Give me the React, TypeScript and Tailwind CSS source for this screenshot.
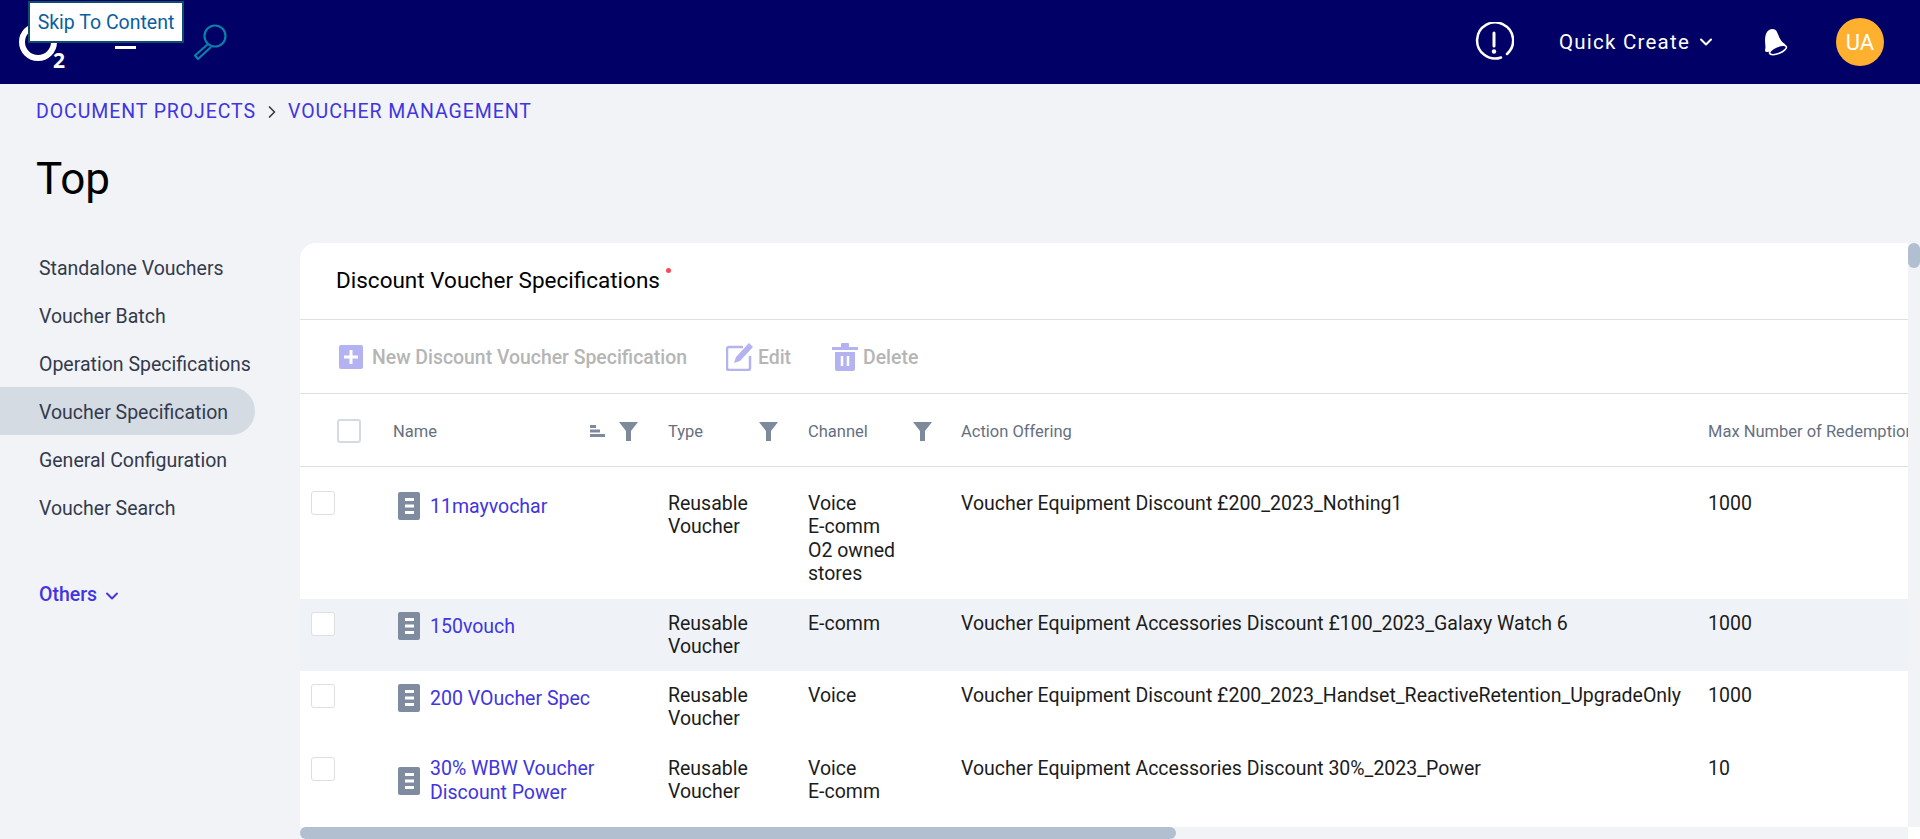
import { ChevronDown, ChevronRight } from 'lucide-react'

const navItems = [
  'Standalone Vouchers',
  'Voucher Batch',
  'Operation Specifications',
  'Voucher Specification',
  'General Configuration',
  'Voucher Search',
]

const rows = [
  {
    name: ['11mayvochar'],
    type: ['Reusable', 'Voucher'],
    channel: ['Voice', 'E-comm', 'O2 owned', 'stores'],
    action: 'Voucher Equipment Discount £200_2023_Nothing1',
    max: '1000',
    rowClass: 'h-[132px] pt-[25px]',
  },
  {
    name: ['150vouch'],
    type: ['Reusable', 'Voucher'],
    channel: ['E-comm'],
    action: 'Voucher Equipment Accessories Discount £100_2023_Galaxy Watch 6',
    max: '1000',
    rowClass: 'h-[72px] pt-[13px] bg-[#eff3f8]',
  },
  {
    name: ['200 VOucher Spec'],
    type: ['Reusable', 'Voucher'],
    channel: ['Voice'],
    action: 'Voucher Equipment Discount £200_2023_Handset_ReactiveRetention_UpgradeOnly',
    max: '1000',
    rowClass: 'h-[73px] pt-[13px]',
  },
  {
    name: ['30% WBW Voucher', 'Discount Power'],
    type: ['Reusable', 'Voucher'],
    channel: ['Voice', 'E-comm'],
    action: 'Voucher Equipment Accessories Discount 30%_2023_Power',
    max: '10',
    rowClass: 'h-[83px] pt-[13px]',
  },
]

const gridCols = 'grid grid-cols-[93px_275px_140px_153px_747px_300px]'

function Funnel() {
  return (
    <svg width="19" height="19" viewBox="0 0 19 19" className="fill-[#7d8a9c]">
      <path d="M0 0h19l-7 9v10H7V9z" />
    </svg>
  )
}

function DocIcon() {
  return (
    <svg width="22" height="28" viewBox="0 0 22 28" className="ml-[1px] shrink-0">
      <rect width="22" height="28" rx="2" fill="#7f8ca0" />
      <rect x="7" y="6" width="9" height="3" fill="#fff" />
      <rect x="7" y="12.5" width="9" height="3" fill="#fff" />
      <rect x="7" y="19" width="9" height="3" fill="#fff" />
    </svg>
  )
}

function Checkbox({ className }: { className: string }) {
  return <div className={`h-6 w-6 rounded-[3px] bg-white ${className}`} />
}

function Header() {
  return (
    <header className="flex h-[84px] items-center bg-[#000066] text-white">
      <svg width="60" height="70" viewBox="0 0 60 70" className="ml-[14px] mt-[2px] shrink-0">
        <circle cx="24" cy="34" r="16" fill="none" stroke="#fff" strokeWidth="6" />
        <text x="39" y="60" fill="#fff" fontSize="21" fontWeight="700" fontFamily="Open Sans, sans-serif">2</text>
      </svg>
      <div className="ml-[41px] mt-[10px] h-[3px] w-[21px] bg-white" />
      <svg width="40" height="40" viewBox="0 0 40 40" className="ml-[55px] mt-[-3px] shrink-0">
        <circle cx="24" cy="15" r="10.5" fill="none" stroke="#0a7fa8" strokeWidth="2.2" />
        <path d="M17 23 4 34.5 7 38 20 26" fill="none" stroke="#0a7fa8" strokeWidth="2.2" strokeLinejoin="round" />
      </svg>
      <div className="ml-auto flex items-center">
        <svg width="40" height="40" viewBox="0 0 40 40" className="shrink-0">
          <path d="M27 35.5A18 18 0 1 1 33 32" fill="none" stroke="#fff" strokeWidth="2.5" strokeLinecap="round" />
          <path d="M20 11v13" stroke="#fff" strokeWidth="3" strokeLinecap="round" />
          <circle cx="20" cy="29.5" r="2.2" fill="#fff" />
        </svg>
        <span className="ml-[45px] text-[20.5px] tracking-[0.06em]">Quick Create</span>
        <ChevronDown size={20} strokeWidth={2.5} className="ml-[6px]" />
        <svg width="30" height="30" viewBox="0 0 30 30" className="ml-[44px] shrink-0">
          <path d="M9 3c3-2 7-1 8 2 2 4 3 9 8 12 1 1 0 2-1 3L8 25c-2 0-3 0-3-2 1-3 0-6 0-10 0-4 1-8 4-10z" fill="#fff" />
          <ellipse cx="18" cy="23" rx="9" ry="3.5" transform="rotate(-22 18 23)" fill="#000066" stroke="#fff" strokeWidth="1.6" />
        </svg>
        <div className="ml-[46px] mr-[36px] flex h-12 w-12 items-center justify-center rounded-full bg-[#ffb02e] text-[22px]">
          UA
        </div>
      </div>
    </header>
  )
}

function Sidebar() {
  return (
    <aside className="w-[300px] shrink-0">
      {navItems.map((item) => (
        <div
          key={item}
          className={`flex h-12 w-[255px] items-center rounded-r-full pl-[39px] pt-[3px] text-[19.5px] text-[#333a4d] ${
            item === 'Voucher Specification' ? 'bg-[#d5dbe3]' : ''
          }`}
        >
          {item}
        </div>
      ))}
      <div className="ml-[39px] mt-[49px] flex items-center text-[19.5px] font-medium text-[#4035e0]">
        Others
        <ChevronDown size={20} strokeWidth={2.25} className="ml-[5px] mt-[3px]" />
      </div>
    </aside>
  )
}

function Toolbar() {
  return (
    <div className="flex h-[74px] items-center border-b border-[#dde1e6] pt-[1px] text-[19.4px] font-medium text-[#b5b5b5]">
      <svg width="24" height="24" viewBox="0 0 24 24" className="ml-[39px] shrink-0">
        <rect width="24" height="24" rx="2" fill="#b5b2f2" />
        <path d="M12 5v14M5 12h14" stroke="#fff" strokeWidth="3" />
      </svg>
      <span className="ml-[9px] pt-[2px]">New Discount Voucher Specification</span>
      <svg width="28" height="28" viewBox="0 0 28 28" className="ml-[39px] shrink-0">
        <path d="M17 4H3a2 2 0 0 0-2 2v19a2 2 0 0 0 2 2h19a2 2 0 0 0 2-2V13" fill="none" stroke="#b5b2f2" strokeWidth="2.5" />
        <path d="M23 0l4 4-13 14-6 2 2-6z" fill="#b5b2f2" />
      </svg>
      <span className="ml-[4px] pt-[2px]">Edit</span>
      <svg width="26" height="28" viewBox="0 0 26 28" className="ml-[41px] shrink-0">
        <path d="M0 4h9V1a1 1 0 0 1 1-1h6a1 1 0 0 1 1 1v3h9v3H0zM3 9h20v17a2 2 0 0 1-2 2H5a2 2 0 0 1-2-2z" fill="#b5b2f2" />
        <path d="M10 13v10M16 13v10" stroke="#fff" strokeWidth="2.5" />
      </svg>
      <span className="ml-[5px] pt-[2px]">Delete</span>
    </div>
  )
}

function TableHead() {
  return (
    <div className={`${gridCols} h-[73px] items-center border-b border-[#dde1e6] pt-[2px] text-[16.5px] text-[#66707f]`}>
      <div className="pl-[37px]">
        <Checkbox className="border-2 border-[#d5dbe3]" />
      </div>
      <div className="flex items-center">
        <span className="pt-[2px]">Name</span>
        <svg width="15" height="12" viewBox="0 0 15 12" className="ml-auto fill-[#7d8a9c]">
          <rect width="6" height="3" />
          <rect y="4.5" width="10" height="3" />
          <rect y="9" width="15" height="3" />
        </svg>
        <div className="ml-[14px] mr-[30px]">
          <Funnel />
        </div>
      </div>
      <div className="flex items-center">
        <span className="pt-[2px]">Type</span>
        <div className="ml-auto mr-[30px]">
          <Funnel />
        </div>
      </div>
      <div className="flex items-center">
        <span className="pt-[2px]">Channel</span>
        <div className="ml-auto mr-[29px]">
          <Funnel />
        </div>
      </div>
      <div className="pt-[2px]">Action Offering</div>
      <div className="whitespace-nowrap pt-[2px]">Max Number of Redemptions</div>
    </div>
  )
}

function TableRows() {
  return (
    <div className="text-[19.5px] leading-[23.3px] text-[#1c1c1c]">
      {rows.map((row) => (
        <div key={row.name[0]} className={`${gridCols} ${row.rowClass}`}>
          <div className={`pl-[11px] ${row.name[0] === '11mayvochar' ? 'mt-[-1px]' : ''}`}>
            <Checkbox className="border border-[#dcdfe3]" />
          </div>
          <div className={`ml-[4px] flex gap-[10px] text-[#4035e0] ${row.name.length > 1 ? 'items-center self-start' : ''}`}>
            <DocIcon />
            <div className={row.name.length > 1 ? 'leading-[24px]' : 'pt-[3px]'}>
              {row.name.map((line) => (
                <div key={line}>{line}</div>
              ))}
            </div>
          </div>
          <div>
            {row.type.map((line) => (
              <div key={line}>{line}</div>
            ))}
          </div>
          <div>
            {row.channel.map((line) => (
              <div key={line}>{line}</div>
            ))}
          </div>
          <div className="whitespace-nowrap">{row.action}</div>
          <div>{row.max}</div>
        </div>
      ))}
    </div>
  )
}

export default function App() {
  return (
    <div className="relative flex h-[839px] w-[1920px] flex-col overflow-hidden bg-[#f1f3f7] font-['Roboto',sans-serif]">
      <a className="absolute left-[28px] top-[1px] flex h-[42px] w-[156px] items-center justify-center border-2 border-[#0f4c6e] bg-white pt-[1px] text-[19.5px] text-[#0a5f9e]">
        Skip To Content
      </a>
      <Header />
      <div className="flex h-[54px] items-center pl-[36px] pt-[1px] text-[19.5px] tracking-[0.047em] text-[#4035e0]">
        DOCUMENT PROJECTS
        <ChevronRight size={20} strokeWidth={2} className="mx-[6px] text-[#333a4d]" />
        VOUCHER MANAGEMENT
      </div>
      <h1 className="h-[105px] pl-[36px] pt-[13px] text-[44px] font-normal leading-[56px] text-black">Top</h1>
      <div className="flex min-h-0 flex-1">
        <Sidebar />
        <div className="flex min-w-0 flex-1 flex-col">
          <div className="flex min-h-0 flex-1">
            <main className="min-w-0 flex-1 overflow-hidden rounded-tl-[16px] bg-white">
              <div className="flex h-[77px] items-center border-b border-[#dde1e6] pl-[36px] text-[22.5px] text-black">
                Discount Voucher Specifications
                <span className="mb-[22px] ml-[6px] h-[5px] w-[5px] rounded-full bg-[#ff4757]" />
              </div>
              <Toolbar />
              <TableHead />
              <TableRows />
            </main>
            <div className="w-3 shrink-0">
              <div className="h-[25px] w-3 rounded-full bg-[#b2bfd0]" />
            </div>
          </div>
          <div className="flex h-3 shrink-0">
            <div className="w-[1608px]">
              <div className="h-3 w-[876px] rounded-full bg-[#b2bfd0]" />
            </div>
            <div className="w-3 bg-white" />
          </div>
        </div>
      </div>
    </div>
  )
}
